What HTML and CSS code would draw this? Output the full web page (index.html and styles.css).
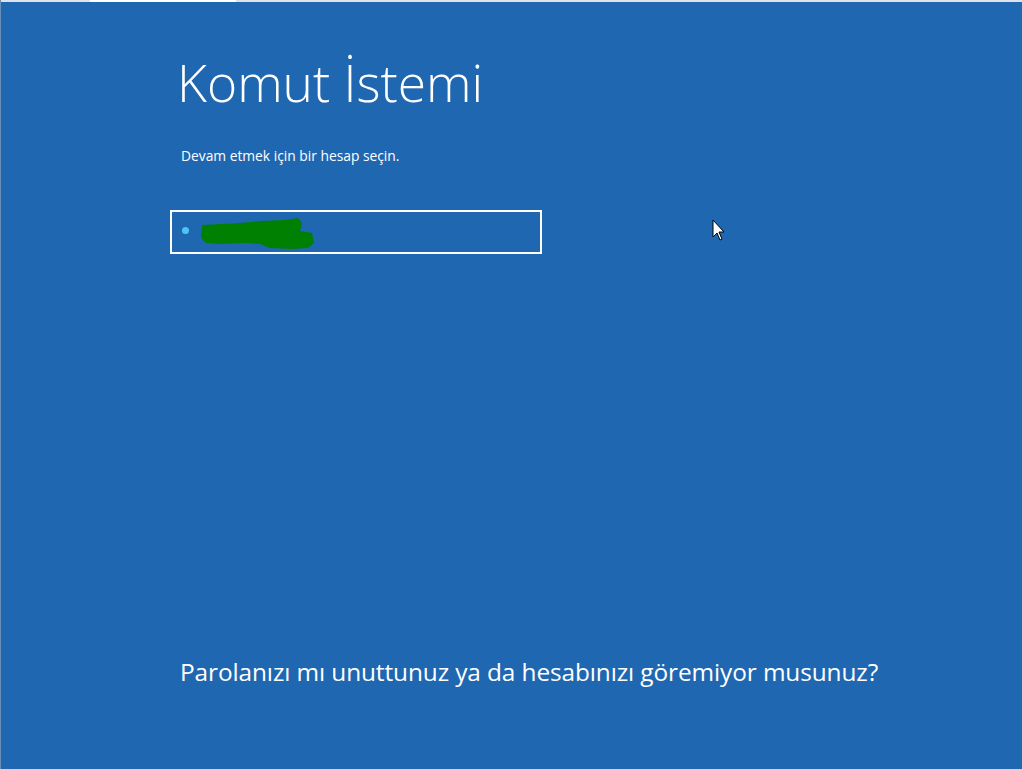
FILE: index.html
```html
<!DOCTYPE html>
<html lang="tr">
<head>
<meta charset="utf-8">
<title>Komut İstemi</title>
<link rel="stylesheet" href="styles.css">
</head>
<body>
<div class="screen">
  <div class="topstrip">
    <div class="seg seg-a"></div>
    <div class="seg seg-b"></div>
    <div class="seg seg-c"></div>
  </div>
  <main class="content">
    <h1 class="title">Komut İstemi</h1>
    <p class="subtitle">Devam etmek için bir hesap seçin.</p>
    <div class="account">
      <span class="dot"></span>
      <svg class="redact" width="116" height="34" viewBox="0 0 116 34">
        <path d="M2 8 L40 6 L62 4 L84 3 L98 1 L102 6 L100 14 L112 16 L114 26 L108 31 L92 32 L70 31 L60 27 L45 26 L22 27 L6 26 L1 21 Z" fill="#008000"/>
      </svg>
    </div>
    <p class="forgot">Parolanızı mı unuttunuz ya da hesabınızı göremiyor musunuz?</p>
  </main>
  <svg class="cursor" width="14" height="24" viewBox="0 0 14 24">
    <path d="M1 1 L1 18 L5 14 L8 21 L10 20 L7 13 L12 13 Z" fill="#fff" stroke="#000" stroke-width="1"/>
  </svg>
</div>
</body>
</html>
```
FILE: styles.css
```css
html, body {
  margin: 0;
  padding: 0;
}
body {
  width: 1022px;
  height: 769px;
  overflow: hidden;
  background: #1f67b1;
  font-family: "Open Sans", "Noto Sans", sans-serif;
  color: #fff;
}
.screen {
  position: relative;
  width: 1022px;
  height: 769px;
  border-left: 1px solid #6c8fb5;
  box-sizing: border-box;
  display: flex;
  flex-direction: column;
}
.topstrip {
  display: flex;
  height: 2px;
}
.seg-a {
  width: 89px;
  background: #dfe3e8;
}
.seg-b {
  width: 146px;
  background: #ffffff;
}
.seg-c {
  flex: 1;
  background: #dfe3e8;
}
.content {
  flex: 1;
  display: flex;
  flex-direction: column;
  padding-left: 169px;
}
.title {
  margin: 44px 0 0 7px;
  font-weight: 300;
  font-size: 51.5px;
  line-height: 72px;
  letter-spacing: 0;
}
.subtitle {
  margin: 29px 0 0 11px;
  font-size: 13.8px;
  line-height: 18px;
}
.account {
  box-sizing: border-box;
  margin-top: 45px;
  width: 372px;
  height: 44px;
  border: 2px solid #fff;
  display: flex;
  align-items: center;
}
.dot {
  width: 7px;
  height: 7px;
  border-radius: 50%;
  background: #4fc3f3;
  margin-left: 10px;
  margin-bottom: 3px;
}
.redact {
  margin-left: 11px;
  margin-top: 3px;
}
.forgot {
  margin: auto 0 82px 10px;
  font-size: 24.4px;
  line-height: 30px;
  font-weight: 400;
  letter-spacing: -0.1px;
}
.cursor {
  position: absolute;
  left: 711px;
  top: 219px;
}
```
